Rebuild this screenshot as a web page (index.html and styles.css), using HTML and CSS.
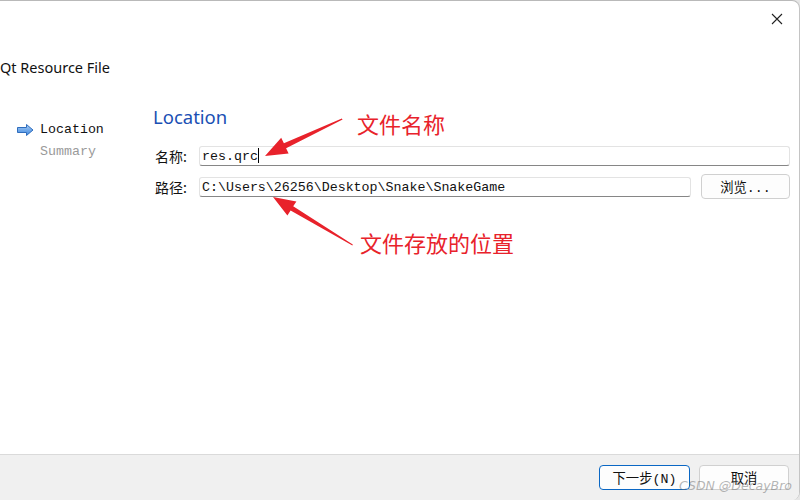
FILE: index.html
```html
<!DOCTYPE html>
<html lang="zh-CN">
<head>
  <meta charset="UTF-8">
  <title>Qt Resource File</title>
  <link rel="stylesheet" href="styles.css">
</head>
<body>
  <div class="window">
    <div class="titlebar">
      <svg class="close" width="12" height="12" viewBox="0 0 12 12">
        <path d="M1 1 L11 11 M11 1 L1 11" stroke="#222" stroke-width="1.1" fill="none"/>
      </svg>
    </div>

    <div class="page-title">Qt Resource File</div>

    <div class="main">
      <ul class="steps">
        <li class="step current">
          <svg class="step-arrow" width="17" height="12" viewBox="0 0 17 12">
            <defs>
              <linearGradient id="ag" x1="0" y1="0" x2="0" y2="1">
                <stop offset="0" stop-color="#a8cdf5"/>
                <stop offset="1" stop-color="#3d86de"/>
              </linearGradient>
            </defs>
            <path d="M0.5 3.5 H9.5 V0.5 L16 6 L9.5 11.5 V8.5 H0.5 Z" fill="url(#ag)" stroke="#2f6dbd" stroke-width="1"/>
          </svg>
          Location
        </li>
        <li class="step">Summary</li>
      </ul>

      <div class="content">
        <h2 class="heading">Location</h2>
        <div class="form">
          <div class="row">
            <label>名称:</label>
            <div class="field">res.qrc<span class="caret"></span></div>
          </div>
          <div class="row">
            <label>路径:</label>
            <div class="field short">C:\Users\26256\Desktop\Snake\SnakeGame</div>
            <button class="btn browse">浏览...</button>
          </div>
        </div>
      </div>
    </div>

    <div class="footer">
      <button class="btn primary">下一步(N)</button>
      <button class="btn">取消</button>
    </div>

    <div class="note note-name">文件名称</div>
    <div class="note note-path">文件存放的位置</div>
    <svg class="arrows" width="800" height="500" viewBox="0 0 800 500">
      <polygon fill="#e8222b" points="265,156 288.6,153.4 286.1,148.2 342.6,119.6 341.8,118.4 283.9,143.2 281.2,137.8"/>
      <polygon fill="#e8222b" points="273,197 287.4,215.4 290.6,210.6 352.4,245.6 352.8,244.4 293.2,206.2 296.4,201.4"/>
    </svg>
    <div class="watermark">CSDN @DecayBro</div>
  </div>
</body>
</html>
```

FILE: styles.css
```css
/* Base */
html, body {
  margin: 0;
  background: #e6e6e6;
}

body {
  width: 800px;
  height: 500px;
  overflow: hidden;
  font-family: "Noto Sans", "Noto Sans CJK SC", sans-serif;
  color: #000;
}

.window {
  position: relative;
  height: 500px;
  box-sizing: border-box;
  display: flex;
  flex-direction: column;
  background: #fff;
  border-top: 1px solid #b9b9b9;
  border-right: 1px solid #c4c4c4;
  border-radius: 0 8px 8px 0;
  overflow: hidden;
}

/* Title bar */
.titlebar {
  height: 35px;
  display: flex;
  justify-content: flex-end;
  align-items: center;
  padding-right: 16px;
}

.page-title {
  margin-top: 21px;
  height: 20px;
  line-height: 20px;
  font-size: 14.5px;
  color: #111;
}

/* Wizard body */
.main {
  flex: 1;
  display: flex;
  margin-top: 27px;
}

.steps {
  width: 153px;
  margin: 0;
  padding: 15px 0 0 17px;
  box-sizing: border-box;
  list-style: none;
  font-family: "Liberation Mono", "Noto Sans CJK SC", monospace;
  font-size: 13.3px;
}

.step {
  height: 22px;
  line-height: 22px;
  padding-left: 23px;
  color: #9a9a9a;
  position: relative;
}

.step.current {
  color: #111;
}

.step-arrow {
  position: absolute;
  left: 0;
  top: 5px;
}

.content {
  flex: 1;
  padding-right: 9px;
}

.heading {
  margin: 0;
  height: 26px;
  line-height: 26px;
  font-size: 18.5px;
  font-weight: normal;
  color: #1a4fb4;
}

.form {
  margin-top: 16px;
  display: flex;
  flex-direction: column;
  gap: 8px;
}

.row {
  display: flex;
  align-items: center;
}

.row label {
  width: 46px;
  padding-left: 2px;
  box-sizing: border-box;
  font-family: "Noto Sans CJK SC", sans-serif;
  font-size: 14px;
  color: #111;
}

.field {
  flex: 1;
  height: 20px;
  box-sizing: border-box;
  padding: 0 2px;
  line-height: 19px;
  border: 1px solid #e3e3e3;
  border-bottom-color: #868686;
  border-radius: 3px;
  font-family: "Liberation Mono", monospace;
  font-size: 13.3px;
  color: #111;
  white-space: nowrap;
}

.field.short {
  margin-right: 10px;
}

.caret {
  display: inline-block;
  width: 1px;
  height: 15px;
  background: #000;
  vertical-align: -3px;
}

/* Buttons */
.btn {
  height: 25px;
  box-sizing: border-box;
  padding: 0;
  border: 1px solid #d0d0d0;
  border-radius: 4px;
  background: #fdfdfd;
  font-family: "Liberation Mono", "Noto Sans CJK SC", monospace;
  font-size: 13.3px;
  color: #111;
  width: 90px;
}

.browse {
  width: 89px;
}

.btn.primary {
  border: 1.5px solid #0a67c4;
  width: 91px;
}

/* Footer */
.footer {
  height: 46px;
  box-sizing: border-box;
  display: flex;
  justify-content: flex-end;
  align-items: center;
  gap: 9px;
  padding: 0 10px 0 0;
  background: #f0f0f0;
  border-top: 1px solid #dadada;
}

/* Annotations */
.note {
  position: absolute;
  font-family: "Noto Sans CJK SC", sans-serif;
  font-size: 22px;
  line-height: 26px;
  color: #e8222b;
}

.note-name {
  left: 357px;
  top: 109px;
}

.note-path {
  left: 360px;
  top: 228px;
}

.arrows {
  position: absolute;
  left: 0;
  top: -1px;
  pointer-events: none;
}

.watermark {
  position: absolute;
  left: 679px;
  top: 477px;
  font-family: "DejaVu Sans", sans-serif;
  font-size: 12.5px;
  font-style: italic;
  color: rgba(110, 110, 110, 0.5);
  white-space: nowrap;
}
```
